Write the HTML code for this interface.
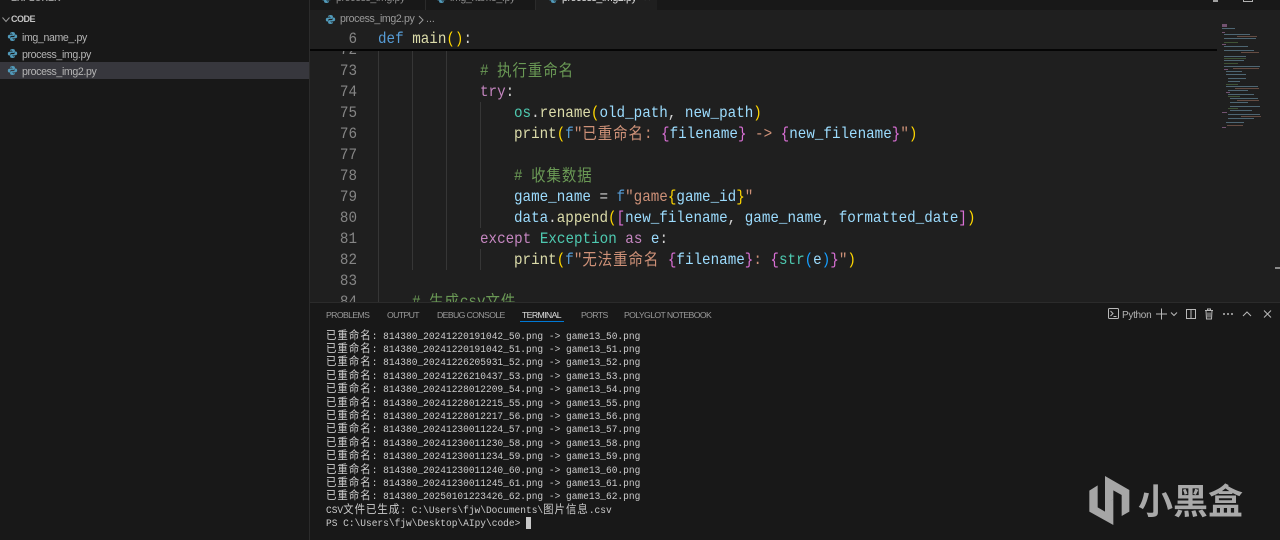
<!DOCTYPE html>
<html lang="zh">
<head>
<meta charset="utf-8">
<title>process_img2.py</title>
<style>
html,body{margin:0;padding:0;width:1280px;height:540px;overflow:hidden;background:#181818}
*{box-sizing:border-box}
.abs,.l,.n,.t,.side,.tab,.ptab{position:absolute;white-space:pre}
#side{position:absolute;left:0;top:0;width:310px;height:540px;background:#181818;border-right:1px solid #2b2b2b}
.side{font:10.6px/16px "Liberation Sans","Noto Sans CJK SC",sans-serif;letter-spacing:-.38px;color:#b4b4b4;left:22px}
#tabs{position:absolute;left:310px;top:0;width:970px;height:10px;background:#181818;overflow:hidden}
.tab{font:10.6px/16px "Liberation Sans",sans-serif;letter-spacing:-.38px;color:#8a8a8a;top:-10px}
#editor{position:absolute;left:310px;top:10px;width:970px;height:292px;background:#1f1f1f;overflow:hidden}
.n,.l{font:16px/21px "Liberation Mono","Noto Sans CJK SC",monospace;height:21px}
.n{color:#858585;width:47px;left:0;text-align:right;transform:scaleX(.89);transform-origin:right center}
.l{color:#d4d4d4;transform:scaleX(.89);transform-origin:left center}
.l i{font:normal 16.2px/0 "Noto Sans CJK SC",sans-serif;letter-spacing:1.1px;position:relative;top:1px}
.g{position:absolute;width:1px;background:#363636}
.k{color:#569cd6}.f{color:#dcdcaa}.y{color:#ffd700}.p{color:#da70d6}.b{color:#179fff}.v{color:#9cdcfe}.s{color:#ce9178}.c{color:#6a9955}.t1{color:#4ec9b0}.m{color:#c586c0}
#panel{position:absolute;left:310px;top:302px;width:970px;height:238px;background:#181818;border-top:1px solid #2b2b2b}
.ptab{font:8.7px/12px "Liberation Sans",sans-serif;letter-spacing:-.62px;color:#9a9a9a;top:6px}
.t{font:10.5px/13.4px "Liberation Mono","Noto Sans CJK SC",monospace;color:#cccccc;left:16px;height:14px;transform:scaleX(.907);transform-origin:left center}
.t i{font:normal 11.5px/0 "Noto Sans CJK SC",sans-serif;letter-spacing:1.09px}
</style>
</head>
<body>
<svg width="0" height="0" style="position:absolute"><defs>
<symbol id="py" viewBox="0 0 16 16"><path fill="#519aba" d="M7.8 1.5c-2.4 0-3 .9-3 2v1.3h3.4v.6H3.4c-1.2 0-2.2.9-2.2 2.7s.9 2.8 2 2.8h1.3V9.2c0-1.1 1-2.1 2.2-2.100h3.100c1 0 1.700-.8 1.700-1.700V3.500c0-1.100-1.200-2-3.700-2zM6.300 2.600a.6.6 0 1 1 0 1.200.6.6 0 0 1 0-1.200z"/><path fill="#519aba" d="M8.200 14.500c2.400 0 3-.9 3-2v-1.300H7.800v-.6h4.800c1.200 0 2.200-.9 2.200-2.700s-.9-2.800-2-2.800h-1.300v1.700c0 1.100-1 2.100-2.200 2.100H6.200c-1 0-1.700.8-1.700 1.700v1.900c0 1.100 1.200 2 3.700 2zm1.500-1.100a.6.6 0 1 1 0-1.200.6.6 0 0 1 0 1.200z"/></symbol>
</defs></svg>

<div id="side">
  <div class="abs" style="left:11px;top:-8px;font:bold 9px/12px 'Liberation Sans',sans-serif;color:#9a9a9a">EXPLORER</div>
  <svg class="abs" style="left:1px;top:16px" width="10" height="8" viewBox="0 0 10 8"><path d="M1.500 1.500 5 5.500l3.500-4" fill="none" stroke="#9a9a9a" stroke-width="1"/></svg>
  <div class="abs" style="left:11px;top:13px;font:bold 9px/13px 'Liberation Sans',sans-serif;letter-spacing:-.5px;color:#c4c4c4">CODE</div>
  <div class="abs" style="left:0;top:62px;width:309px;height:17px;background:#37373d"></div>
  <svg class="abs" style="left:7px;top:31px" width="11" height="11"><use href="#py"/></svg>
  <svg class="abs" style="left:7px;top:48px" width="11" height="11"><use href="#py"/></svg>
  <svg class="abs" style="left:7px;top:65px" width="11" height="11"><use href="#py"/></svg>
  <div class="side" style="top:30px">img_name_.py</div>
  <div class="side" style="top:47px">process_img.py</div>
  <div class="side" style="top:64px">process_img2.py</div>
</div>

<div id="tabs">
  <div class="abs" style="left:225px;top:0;width:122px;height:10px;background:#1f1f1f"></div>
  <div class="abs" style="left:115px;top:0;width:1px;height:10px;background:#2b2b2b"></div>
  <div class="abs" style="left:225px;top:0;width:1px;height:10px;background:#2b2b2b"></div>
  <svg class="abs" style="left:11px;top:-7px" width="11" height="11"><use href="#py"/></svg>
  <svg class="abs" style="left:126px;top:-7px" width="11" height="11"><use href="#py"/></svg>
  <svg class="abs" style="left:238px;top:-7px" width="11" height="11"><use href="#py"/></svg>
  <div class="tab" style="left:26px">process_img.py</div>
  <div class="tab" style="left:140px">img_name_.py</div>
  <div class="tab" style="left:252px;color:#e0e0e0">process_img2.py</div>
  <div class="tab" style="left:333px;color:#aaa">✕</div>
  <div class="abs" style="left:903px;top:0;width:5px;height:2px;background:#a0a0a0"></div>
  <div class="abs" style="left:933px;top:-4px;width:10px;height:6px;border:1px solid #b0b0b0"></div>
</div>

<div id="editor">
  <!-- breadcrumb -->
  <svg class="abs" style="left:15px;top:4px" width="11" height="11"><use href="#py"/></svg>
  <div class="abs" style="left:30px;top:1px;font:10.6px/16px 'Liberation Sans',sans-serif;letter-spacing:-.38px;color:#9a9a9a">process_img2.py</div>
  <svg class="abs" style="left:107px;top:5px" width="8" height="10" viewBox="0 0 8 10"><path d="M2 1l4 4-4 4" fill="none" stroke="#9a9a9a"/></svg>
  <div class="abs" style="left:116px;top:1px;font:10.6px/16px 'Liberation Sans',sans-serif;color:#9a9a9a">...</div>

  <!-- indent guides -->
  <div class="g" style="left:68px;top:40px;height:252px"></div>
  <div class="g" style="left:102px;top:40px;height:220px"></div>
  <div class="g" style="left:136px;top:40px;height:220px"></div>
  <div class="g" style="left:170px;top:92px;height:126px"></div>
  <div class="g" style="left:170px;top:239px;height:21px"></div>

  <div class="n" style="top:30px">72</div>
  <div class="n" style="top:51px">73</div><div class="l" style="top:51px;left:170px"><span class="c"># <i>执行重命名</i></span></div>
  <div class="n" style="top:72px">74</div><div class="l" style="top:72px;left:170px"><span class="m">try</span>:</div>
  <div class="n" style="top:93px">75</div><div class="l" style="top:93px;left:204px"><span class="t1">os</span>.<span class="f">rename</span><span class="y">(</span><span class="v">old_path</span>, <span class="v">new_path</span><span class="y">)</span></div>
  <div class="n" style="top:114px">76</div><div class="l" style="top:114px;left:204px"><span class="f">print</span><span class="y">(</span><span class="k">f</span><span class="s">"<i>已重命名</i>: </span><span class="p">{</span><span class="v">filename</span><span class="p">}</span><span class="s"> -&gt; </span><span class="p">{</span><span class="v">new_filename</span><span class="p">}</span><span class="s">"</span><span class="y">)</span></div>
  <div class="n" style="top:135px">77</div>
  <div class="n" style="top:156px">78</div><div class="l" style="top:156px;left:204px"><span class="c"># <i>收集数据</i></span></div>
  <div class="n" style="top:177px">79</div><div class="l" style="top:177px;left:204px"><span class="v">game_name</span> = <span class="k">f</span><span class="s">"game</span><span class="y">{</span><span class="v">game_id</span><span class="y">}</span><span class="s">"</span></div>
  <div class="n" style="top:198px">80</div><div class="l" style="top:198px;left:204px"><span class="v">data</span>.<span class="f">append</span><span class="y">(</span><span class="p">[</span><span class="v">new_filename</span>, <span class="v">game_name</span>, <span class="v">formatted_date</span><span class="p">]</span><span class="y">)</span></div>
  <div class="n" style="top:219px">81</div><div class="l" style="top:219px;left:170px"><span class="m">except</span> <span class="t1">Exception</span> <span class="m">as</span> <span class="v">e</span>:</div>
  <div class="n" style="top:240px">82</div><div class="l" style="top:240px;left:204px"><span class="f">print</span><span class="y">(</span><span class="k">f</span><span class="s">"<i>无法重命名</i> </span><span class="p">{</span><span class="v">filename</span><span class="p">}</span><span class="s">: </span><span class="p">{</span><span class="t1">str</span><span class="b">(</span><span class="v">e</span><span class="b">)</span><span class="p">}</span><span class="s">"</span><span class="y">)</span></div>
  <div class="n" style="top:261px">83</div>
  <div class="n" style="top:282px">84</div><div class="l" style="top:282px;left:102px"><span class="c"># <i>生成</i>csv<i>文件</i></span></div>

  <!-- sticky scroll -->
  <div class="abs" style="left:0;top:20px;width:907px;height:20px;background:#1f1f1f"></div>
  <div class="abs" style="left:0;top:39px;width:907px;height:2px;background:#050505"></div>
  <div class="n" style="top:19px">6</div>
  <div class="l" style="top:19px;left:68px"><span class="k">def</span> <span class="f">main</span><span class="y">()</span>:</div>

  <!-- minimap -->
  <svg class="abs" style="left:905px;top:12px" width="50" height="112" viewBox="0 0 50 112" opacity=".5">
    <g fill="#9cdcfe" opacity=".75">
      <rect x="7" y="6" width="13" height="1"/><rect x="9" y="12" width="26" height="1"/><rect x="9" y="16" width="32" height="1"/><rect x="9" y="24" width="24" height="1"/><rect x="9" y="28" width="30" height="1"/><rect x="9" y="34" width="22" height="1"/><rect x="9" y="38" width="20" height="1"/><rect x="9" y="44" width="36" height="1"/><rect x="11" y="49" width="16" height="1"/><rect x="11" y="52" width="20" height="1"/><rect x="13" y="56" width="18" height="1"/><rect x="13" y="59" width="12" height="1"/><rect x="11" y="64" width="32" height="1"/><rect x="13" y="68" width="20" height="1"/><rect x="13" y="72" width="26" height="1"/><rect x="15" y="76" width="28" height="1"/><rect x="15" y="80" width="18" height="1"/><rect x="15" y="84" width="30" height="1"/><rect x="15" y="88" width="22" height="1"/><rect x="13" y="92" width="32" height="1"/><rect x="13" y="96" width="26" height="1"/><rect x="11" y="100" width="18" height="1"/>
    </g>
    <g fill="#ce9178" opacity=".8">
      <rect x="22" y="14" width="20" height="1"/><rect x="26" y="30" width="18" height="1"/><rect x="18" y="46" width="26" height="1"/><rect x="20" y="66" width="24" height="1"/><rect x="22" y="78" width="22" height="1"/><rect x="26" y="94" width="20" height="1"/><rect x="12" y="103" width="16" height="1"/>
    </g>
    <g fill="#6a9955" opacity=".85">
      <rect x="9" y="20" width="14" height="1"/><rect x="9" y="36" width="22" height="1"/><rect x="9" y="41" width="14" height="1"/><rect x="11" y="62" width="12" height="1"/><rect x="13" y="74" width="12" height="1"/><rect x="13" y="86" width="10" height="1"/>
    </g>
    <g fill="#c586c0">
      <rect x="7" y="2" width="5" height="3"/><rect x="7" y="10" width="3" height="1"/><rect x="7" y="22" width="4" height="1"/><rect x="9" y="47" width="4" height="1"/><rect x="11" y="70" width="4" height="1"/><rect x="7" y="90" width="5" height="1"/><rect x="7" y="105" width="4" height="1"/>
    </g>
  </svg>
  <div class="abs" style="left:965px;top:257px;width:5px;height:2px;background:#8a8a8a"></div>
</div>

<div id="panel">
  <div class="ptab" style="left:16px">PROBLEMS</div>
  <div class="ptab" style="left:77px">OUTPUT</div>
  <div class="ptab" style="left:127px">DEBUG CONSOLE</div>
  <div class="ptab" style="left:212px;color:#e0e0e0">TERMINAL</div>
  <div class="ptab" style="left:271px">PORTS</div>
  <div class="ptab" style="left:314px">POLYGLOT NOTEBOOK</div>
  <div class="abs" style="left:210px;top:18px;width:44px;height:1px;background:#0078d4"></div>

  <!-- panel actions -->
  <svg class="abs" style="left:797px;top:4px" width="170" height="14" viewBox="0 0 170 14" fill="none" stroke="#b8b8b8" stroke-width="1">
    <rect x="1.500" y="1.500" width="10" height="10" rx="1"/><path d="M3.500 4l2.500 2.500L3.500 9M6.500 9.500h3"/>
    <path d="M49 7h11M54.500 1.500v11"/><path d="M64 5.500l3 3 3-3"/>
    <rect x="79.500" y="2.500" width="9" height="9"/><path d="M84 2.500v9"/>
    <path d="M98 3.500h8M100.500 3.500V2h3v1.500M99 3.500l.5 8.500h5l.5-8.500M101 5.500v5M103 5.500v5"/>
    <path d="M116 7h2M120 7h2M124 7h2" stroke-width="1.500"/>
    <path d="M136 9l4-4 4 4"/>
    <path d="M157 3.500l7 7M164 3.500l-7 7"/>
  </svg>
  <div class="abs" style="left:812px;top:6px;font:10px/13px 'Liberation Sans',sans-serif;letter-spacing:-.3px;color:#b4b4b4">Python</div>

  <div class="t" style="top:27.5px"><i>已重命名</i>: 814380_20241220191042_50.png -&gt; game13_50.png</div>
  <div class="t" style="top:40.9px"><i>已重命名</i>: 814380_20241220191042_51.png -&gt; game13_51.png</div>
  <div class="t" style="top:54.3px"><i>已重命名</i>: 814380_20241226205931_52.png -&gt; game13_52.png</div>
  <div class="t" style="top:67.7px"><i>已重命名</i>: 814380_20241226210437_53.png -&gt; game13_53.png</div>
  <div class="t" style="top:81.1px"><i>已重命名</i>: 814380_20241228012209_54.png -&gt; game13_54.png</div>
  <div class="t" style="top:94.5px"><i>已重命名</i>: 814380_20241228012215_55.png -&gt; game13_55.png</div>
  <div class="t" style="top:107.9px"><i>已重命名</i>: 814380_20241228012217_56.png -&gt; game13_56.png</div>
  <div class="t" style="top:121.3px"><i>已重命名</i>: 814380_20241230011224_57.png -&gt; game13_57.png</div>
  <div class="t" style="top:134.7px"><i>已重命名</i>: 814380_20241230011230_58.png -&gt; game13_58.png</div>
  <div class="t" style="top:148.1px"><i>已重命名</i>: 814380_20241230011234_59.png -&gt; game13_59.png</div>
  <div class="t" style="top:161.5px"><i>已重命名</i>: 814380_20241230011240_60.png -&gt; game13_60.png</div>
  <div class="t" style="top:174.9px"><i>已重命名</i>: 814380_20241230011245_61.png -&gt; game13_61.png</div>
  <div class="t" style="top:188.3px"><i>已重命名</i>: 814380_20250101223426_62.png -&gt; game13_62.png</div>
  <div class="t" style="top:201.7px">CSV<i>文件已生成</i>: C:\Users\fjw\Documents\<i>图片信息</i>.csv</div>
  <div class="t" style="top:215.1px">PS C:\Users\fjw\Desktop\AIpy\code&gt; </div>
  <div class="abs" style="left:216px;top:214px;width:5px;height:12px;background:#c8c8c8"></div>
</div>

<!-- watermark -->
<svg class="abs" style="left:1085px;top:470px" width="60" height="60" viewBox="0 0 180 180" fill="#a6a6a6">
  <path d="M60 18 133 60V125L110 138V75L85 61V88L60 103Z"/>
  <path d="M13 62 38 46V112L60 125V101L85 88V165L13 125Z"/>
</svg>
<div class="abs" style="left:1138px;top:478px;font:700 35px/44px 'Noto Sans CJK SC',sans-serif;color:#a9a9a9">小黑盒</div>
</body>
</html>
